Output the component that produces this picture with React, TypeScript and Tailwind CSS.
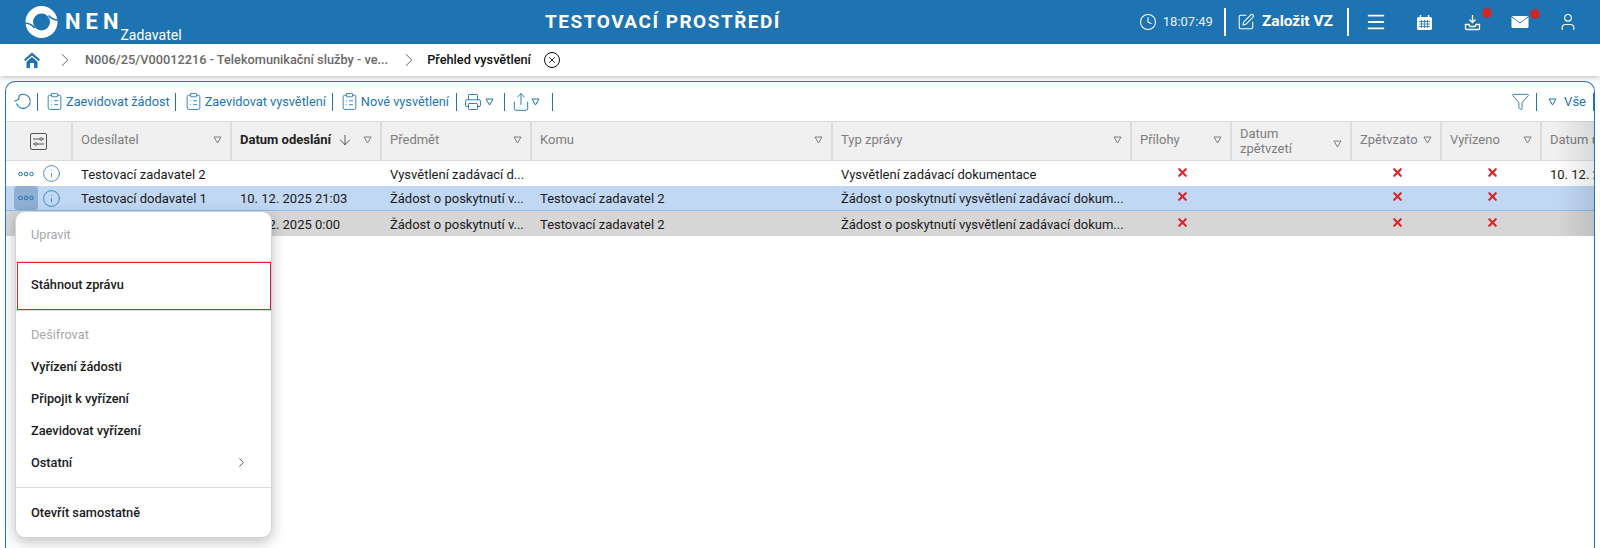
import type { ReactNode } from "react";
import { ChevronRight, Clock, SquarePen, Menu, User, ArrowDown, X, ClipboardList, Printer, Share, Info, Funnel } from "lucide-react";

interface Column {
  label: string;
  width: string;
  bold?: boolean;
}

interface Row {
  from: string;
  date: string;
  subject: string;
  to: string;
  type: string;
  last: string;
  bg: string;
}

const columns: Column[] = [
  { label: "Odesílatel", width: "w-[159px]" },
  { label: "Datum odeslání", width: "w-[150px]", bold: true },
  { label: "Předmět", width: "w-[150px]" },
  { label: "Komu", width: "w-[301px]" },
  { label: "Typ zprávy", width: "w-[299px]" },
  { label: "Přílohy", width: "w-[100px]" },
  { label: "Datum zpětvzetí", width: "w-[120px]" },
  { label: "Zpětvzato", width: "w-[90px]" },
  { label: "Vyřízeno", width: "w-[100px]" },
];

const rows: Row[] = [
  { from: "Testovací zadavatel 2", date: "", subject: "Vysvětlení zadávací d...", to: "", type: "Vysvětlení zadávací dokumentace", last: "10. 12. 2025", bg: "bg-white" },
  { from: "Testovací dodavatel 1", date: "10. 12. 2025 21:03", subject: "Žádost o poskytnutí v...", to: "Testovací zadavatel 2", type: "Žádost o poskytnutí vysvětlení zadávací dokum...", last: "", bg: "bg-[#c1d8f4] border-b border-[#8fbdee]" },
  { from: "", date: "10. 12. 2025 0:00", subject: "Žádost o poskytnutí v...", to: "Testovací zadavatel 2", type: "Žádost o poskytnutí vysvětlení zadávací dokum...", last: "", bg: "bg-[#d6d6d6]" },
];

function Triangle() {
  return (
    <svg width="9" height="8" viewBox="0 0 9 8" className="shrink-0">
      <path d="M1 1h7L4.5 7z" fill="none" stroke="currentColor" strokeWidth="1" />
    </svg>
  );
}

function Sep({ className = "" }: { className?: string }) {
  return <span className={`w-px h-[18px] bg-[#1e74b3] shrink-0 ${className}`} />;
}

function Logo() {
  return (
    <svg width="33" height="32" viewBox="0 0 32 32" className="shrink-0">
      <circle cx="16" cy="16" r="16" fill="#fff" />
      <circle cx="16" cy="16" r="8.5" fill="#1e74b3" />
      <path d="M-1 17C3 17 6 18 9 22" fill="none" stroke="#1e74b3" strokeWidth="1.6" />
      <path d="M33 14C29 14 26 13 23 9.5" fill="none" stroke="#1e74b3" strokeWidth="1.6" />
    </svg>
  );
}

function DotsIcon() {
  return (
    <svg width="16" height="6" viewBox="0 0 16 6" className="text-[#1e74b3]">
      <circle cx="2.5" cy="3" r="1.8" fill="none" stroke="currentColor" />
      <circle cx="8" cy="3" r="1.8" fill="none" stroke="currentColor" />
      <circle cx="13.5" cy="3" r="1.8" fill="none" stroke="currentColor" />
    </svg>
  );
}

function Cross() {
  return <X size={13} strokeWidth={4} className="text-[#d9252a]" />;
}

function HeadIcon({ children, dot }: { children: ReactNode; dot?: boolean }) {
  return (
    <div className="relative w-12 flex justify-center text-white">
      {children}
      {dot && <span className="absolute -top-[6px] left-[34px] w-[10px] h-[10px] rounded-full bg-[#c62a2a]" />}
    </div>
  );
}

function ToolButton({ label, className = "" }: { label: string; className?: string }) {
  return (
    <div className={`flex items-center gap-[2px] text-[12.75px] text-[#1e74b3] ${className}`}>
      <ClipboardList size={19} strokeWidth={1.1} />
      <span>{label}</span>
    </div>
  );
}

function MenuItem({ label, disabled }: { label: string; disabled?: boolean }) {
  return (
    <div className={`h-8 flex items-center pl-[15px] text-[12.75px] ${disabled ? "text-[#a8a8a8]" : "text-[#1a1a1a] font-medium"}`}>
      {label}
    </div>
  );
}

export default function App() {
  return (
    <div className="relative h-[548px] w-[1600px] overflow-hidden bg-white font-['Roboto',sans-serif]">

      {/* HEADER */}
      <div className="h-11 bg-[#1e74b3] flex items-center text-white">
        <div className="w-[500px] flex items-center pl-[25px]">
          <Logo />
          <span className="ml-[7px] text-[22px] font-bold tracking-[5px] leading-none">NEN</span>
          <span className="text-[14px] leading-none -ml-[3px] mt-[26px]">Zadavatel</span>
        </div>
        <div className="w-[326px] text-center text-[19px] font-bold tracking-[1.5px] whitespace-nowrap">TESTOVACÍ PROSTŘEDÍ</div>
        <div className="ml-auto flex items-center pr-[8px]">
          <Clock size={18} strokeWidth={1.4} />
          <span className="ml-[6px] text-[13px] text-[#eaf2f8]">18:07:49</span>
          <span className="ml-[11px] w-[2px] h-7 bg-white" />
          <SquarePen size={18} strokeWidth={1.4} className="ml-[11px]" />
          <span className="ml-[7px] text-[15.5px] font-bold">Založit VZ</span>
          <span className="ml-[14px] w-[2px] h-7 bg-white" />
          <div className="ml-[3px] flex items-center">
            <HeadIcon><Menu size={22} strokeWidth={2} /></HeadIcon>
            <HeadIcon>
              <svg width="17" height="17" viewBox="0 0 17 17" fill="none">
                <rect x="1" y="3" width="15" height="13" rx="1.5" fill="#fff" />
                <path d="M4.5 1v3M12.5 1v3" stroke="#fff" strokeWidth="1.5" />
                <path d="M3 7.5h11M3 10h11M3 12.5h11M5.5 6v8M8.5 6v8M11.5 6v8" stroke="#1e74b3" strokeWidth="0.8" />
              </svg>
            </HeadIcon>
            <HeadIcon dot>
              <svg width="17" height="17" viewBox="0 0 17 17" fill="none" stroke="#fff" strokeWidth="1.3">
                <path d="M8.5 1v7M5.5 5.5l3 3 3-3" />
                <path d="M1.5 10.5h3.5l1 2h5l1-2h3.5v4a1 1 0 0 1-1 1h-12a1 1 0 0 1-1-1z" />
              </svg>
            </HeadIcon>
            <HeadIcon dot>
              <svg width="18" height="14" viewBox="0 0 18 14" fill="none">
                <rect x="0.5" y="1" width="17" height="12" rx="1.5" fill="#fff" />
                <path d="M1 2l8 6 8-6" stroke="#1e74b3" strokeWidth="1" />
              </svg>
            </HeadIcon>
            <HeadIcon><User size={20} strokeWidth={1.4} /></HeadIcon>
          </div>
        </div>
      </div>

      {/* BREADCRUMB */}
      <div className="relative h-8 flex items-center pl-[24px] bg-white shadow-[0_2px_5px_rgba(0,0,0,0.22)] text-[12.75px]">
        <svg width="16" height="16" viewBox="0 0 16 16" className="shrink-0">
          <path d="M8 0.5L16 7.5L14.6 9L8 3.4L1.4 9L0 7.5z" fill="#1e74b3" />
          <path d="M8 5L13.5 9.7V16H10V11H6V16H2.5V9.7z" fill="#1e74b3" />
        </svg>
        <ChevronRight size={22} strokeWidth={1} className="ml-[14px] text-[#555]" />
        <span className="ml-[9px] text-[#6a6a6a] font-medium">N006/25/V00012216 - Telekomunikační služby - ve...</span>
        <ChevronRight size={22} strokeWidth={1} className="ml-[10px] text-[#555]" />
        <span className="ml-[7px] font-medium text-[#111]">Přehled vysvětlení</span>
        <span className="ml-[13px] w-4 h-4 rounded-full border border-[#111] flex items-center justify-center">
          <X size={10} strokeWidth={2} />
        </span>
      </div>

      {/* PANEL */}
      <div className="relative mx-[5px] mt-[5px] h-[467px] rounded-t-[10px] border-t border-x border-[#1e74b3] overflow-hidden">

        <div className="h-[39px] flex items-center pl-[8px] text-[#1e74b3]">
          <svg width="18" height="17" viewBox="0 0 18 17" fill="none" stroke="currentColor" strokeWidth="1.1" className="shrink-0">
            <path d="M5.2 2.6A7 7 0 1 1 2.6 10.5" />
            <path d="M0.5 8.3L4.6 6.4L5.4 2.2" />
          </svg>
          <Sep className="ml-[5px]" />
          <ToolButton label="Zaevidovat žádost" className="ml-[7px]" />
          <Sep className="ml-[5px]" />
          <ToolButton label="Zaevidovat vysvětlení" className="ml-[8px]" />
          <Sep className="ml-[6px]" />
          <ToolButton label="Nové vysvětlení" className="ml-[7px]" />
          <Sep className="ml-[7px]" />
          <Printer size={18} strokeWidth={1.2} className="ml-[7px]" />
          <span className="ml-[3px]"><Triangle /></span>
          <Sep className="ml-[10px]" />
          <Share size={20} strokeWidth={1.1} className="ml-[6px]" />
          <Triangle />
          <Sep className="ml-[12px]" />
          <div className="ml-auto flex items-center gap-[7px]">
            <Funnel size={19} strokeWidth={1.1} className="-mr-[1px]" />
            <Sep />
            <span className="ml-[4px]"><Triangle /></span>
            <span className="text-[13px]">Vše</span>
            <Sep />
          </div>
        </div>

        {/* TABLE HEAD */}
        <div className="flex h-[40px] w-[1700px] bg-[#f0f0f0] border-y border-[#dcdcdc] text-[13px] text-[#7d7d7d]">
          <div className="w-[67px] shrink-0 flex items-center justify-center border-r-2 border-[#dcdcdc]">
            <svg width="17" height="17" viewBox="0 0 17 17" fill="none" stroke="#555" strokeWidth="1">
              <rect x="0.5" y="0.5" width="16" height="16" rx="1.5" />
              <path d="M3 6h7M12.5 6H14M3 11h1.5M7 11h7" />
              <circle cx="11.2" cy="6" r="1.3" />
              <circle cx="5.8" cy="11" r="1.3" />
            </svg>
          </div>
          {columns.map((c: Column) => (
            <div key={c.label} className={`${c.width} shrink-0 flex items-center justify-between px-2 border-r-2 border-[#dcdcdc] ${c.label === "Datum zpětvzetí" ? "" : "pb-[3px]"}`}>
              <span className={`leading-[15px] ${c.label === "Datum zpětvzetí" ? "w-[70px]" : "whitespace-nowrap"} ${c.bold ? "font-bold text-[#222] flex items-center gap-[6px]" : ""}`}>
                {c.label}
                {c.bold && <ArrowDown size={16} strokeWidth={1.1} />}
              </span>
              <span className={c.label === "Datum zpětvzetí" ? "mt-[5px]" : ""}><Triangle /></span>
            </div>
          ))}
          <div className="flex-1 flex items-center pl-2 pb-[3px]">Datum uveřejnění</div>
        </div>

        {/* TABLE ROWS */}
        {rows.map((r: Row, i: number) => (
          <div key={i} className={`flex h-[25px] w-[1700px] items-center pt-[2px] text-[13px] text-[#1a1a1a] whitespace-nowrap ${r.bg}`}>
            <div className="w-[67px] shrink-0 flex items-center pl-[8px] -mt-[2px]">
              <div className={`w-[24px] h-[24px] flex items-center justify-center rounded-[4px] ${i === 1 ? "bg-[#8fb0d3]" : ""}`}>
                <DotsIcon />
              </div>
              <Info size={19} strokeWidth={1} className="text-[#1e74b3] ml-[4px]" />
            </div>
            <div className="w-[159px] shrink-0 pl-2">{r.from}</div>
            <div className="w-[150px] shrink-0 pl-2">{r.date}</div>
            <div className="w-[150px] shrink-0 pl-2">{r.subject}</div>
            <div className="w-[301px] shrink-0 pl-2">{r.to}</div>
            <div className="w-[299px] shrink-0 pl-2">{r.type}</div>
            <div className="w-[100px] shrink-0 flex justify-center -mt-[5px]"><Cross /></div>
            <div className="w-[120px] shrink-0" />
            <div className="w-[90px] shrink-0 flex justify-center -mt-[5px]"><Cross /></div>
            <div className="w-[100px] shrink-0 flex justify-center -mt-[5px]"><Cross /></div>
            <div className="flex-1 pl-2">{r.last}</div>
          </div>
        ))}

        {/* right fade */}
        <div className="absolute right-0 top-[39px] w-[38px] h-[115px] bg-gradient-to-r from-transparent to-black/10" />
      </div>

      {/* CONTEXT MENU */}
      <div className="absolute left-[15px] top-[211px] w-[257px] h-[327px] bg-white rounded-[10px] border border-[#d4d4d4] shadow-[0_4px_14px_rgba(0,0,0,0.25)] flex flex-col pt-[7px]">
        <MenuItem label="Upravit" disabled />
        <div className="mt-[10px] border-t border-[#dcdcdc]" />
        <div className="ml-[1px] h-[48px] border border-[#ee1c25] flex items-center pl-[13px] pb-[2px] text-[12.75px] font-medium text-[#1a1a1a]">Stáhnout zprávu</div>
        <div className="border-t border-[#dcdcdc]" />
        <div className="mt-[8px]"><MenuItem label="Dešifrovat" disabled /></div>
        <MenuItem label="Vyřízení žádosti" />
        <MenuItem label="Připojit k vyřízení" />
        <MenuItem label="Zaevidovat vyřízení" />
        <div className="flex items-center justify-between pr-[22px]">
          <MenuItem label="Ostatní" />
          <ChevronRight size={15} strokeWidth={1.3} className="text-[#333] -mt-[2px]" />
        </div>
        <div className="mt-[8px] border-t border-[#dcdcdc]" />
        <div className="mt-[9px]"><MenuItem label="Otevřít samostatně" /></div>
      </div>
    </div>
  );
}
